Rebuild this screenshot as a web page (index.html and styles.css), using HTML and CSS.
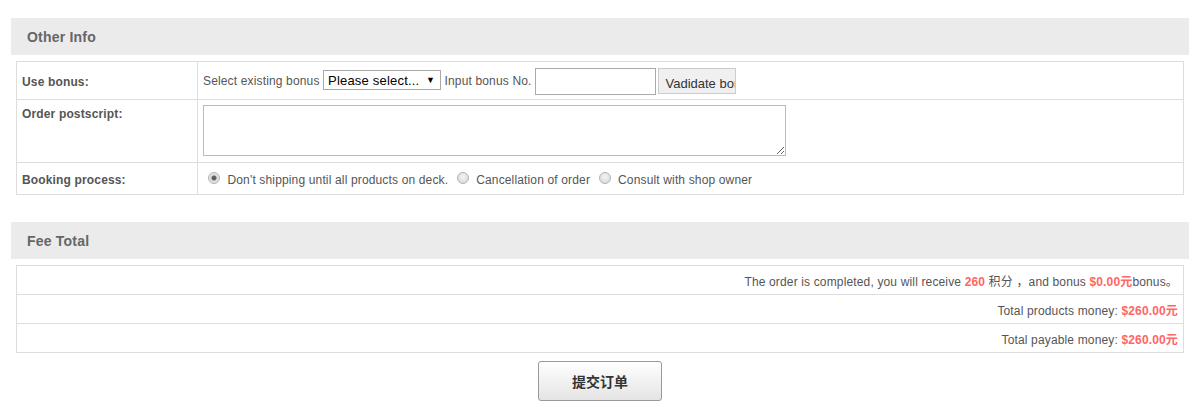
FILE: index.html
```html
<!DOCTYPE html>
<html>
<head>
<meta charset="utf-8">
<link rel="stylesheet" href="styles.css">
</head>
<body>
<div class="wrap">
  <div class="section-head">Other Info</div>
  <table class="info">
    <tr class="r1">
      <td class="lbl">Use bonus:</td>
      <td class="val">
        <span class="txt">Select existing bonus</span>
        <span class="sel"><span>Please select...</span><span class="arrow">▼</span></span>
        <span class="txt">Input bonus No.</span>
        <input class="bonus-input" type="text">
        <button class="validate">Vadidate bonus</button>
      </td>
    </tr>
    <tr class="r2">
      <td class="lbl top">Order postscript:</td>
      <td class="val top"><textarea class="ps"></textarea></td>
    </tr>
    <tr class="r3">
      <td class="lbl">Booking process:</td>
      <td class="val">
        <label class="opt"><input type="radio" name="b" checked> Don't shipping until all products on deck.</label>
        <label class="opt"><input type="radio" name="b"> Cancellation of order</label>
        <label class="opt"><input type="radio" name="b"> Consult with shop owner</label>
      </td>
    </tr>
  </table>

  <div class="section-head second">Fee Total</div>
  <table class="fee">
    <tr><td>The order is completed, you will receive <b class="red">260</b> 积分 ，and bonus <b class="red">$0.00元</b>bonus。</td></tr>
    <tr><td>Total products money: <b class="red">$260.00元</b></td></tr>
    <tr><td>Total payable money: <b class="red">$260.00元</b></td></tr>
  </table>
  <div class="submit-row"><button class="submit">提交订单</button></div>
</div>
</body>
</html>
```

FILE: styles.css
```css
html, body { margin: 0; padding: 0; background: #fff; }
body {
  font-family: "Liberation Sans", Arial, "Noto Sans CJK SC", sans-serif;
  font-size: 12px;
  color: #555;
  letter-spacing: 0.15px;
}
.wrap { margin: 18px 0 0 11px; width: 1178px; }
.section-head {
  height: 37px;
  line-height: 38px;
  background: #ebebeb;
  padding-left: 16px;
  font-size: 14px;
  font-weight: bold;
  color: #666;
  letter-spacing: 0.2px;
}
.section-head.second { margin-top: 27px; }
table { border-collapse: collapse; margin: 6px 5px 0 5px; width: 1168px; }
td { border: 1px solid #ddd; padding: 0 5px; }
.info .lbl { width: 170px; font-weight: bold; color: #555; }
.info .r1 td { height: 35px; padding-top: 2px; }
.info .r2 td { height: 55px; }
.info .r3 td { height: 29px; padding-top: 2px; }
.info td.top { vertical-align: top; padding-top: 7px; }
.info .r2 td.val { padding-top: 5px; }
.val { white-space: nowrap; }
.sel {
  display: inline-flex;
  align-items: center;
  justify-content: space-between;
  box-sizing: border-box;
  width: 118px; height: 20px;
  border: 1px solid #a9a9a9;
  padding: 0 5px 0 4px;
  font-size: 13px; color: #000;
  letter-spacing: 0.2px;
  vertical-align: middle;
  margin-top: -3px;
}
.sel .arrow { font-size: 9px; }
.bonus-input {
  box-sizing: border-box;
  width: 121px; height: 27px;
  border: 1px solid #aaa;
  vertical-align: middle;
  margin: -1px 0 0 0;
}
.validate {
  box-sizing: border-box;
  width: 78px; height: 26px;
  border: 1px solid #ccc;
  background: #f0f0f0;
  font-family: "Liberation Sans", Arial, sans-serif;
  font-size: 13px; color: #333;
  padding: 4px 0 0 6px;
  text-align: left;
  overflow: hidden; white-space: nowrap;
  text-overflow: clip;
  vertical-align: middle;
  margin: -1px 0 0 -1px;
}
.ps {
  box-sizing: border-box;
  width: 583px; height: 51px;
  border: 1px solid #bbb;
  margin: 0; display: block;
}
.opt { margin-right: 0; }
.opt input {
  appearance: none;
  -webkit-appearance: none;
  box-sizing: border-box;
  width: 12px; height: 12px;
  border-radius: 50%;
  border: 1px solid #b5b5b5;
  background: radial-gradient(circle at 50% 40%, #f4f4f4, #d4d4d4);
  margin: 0 4px 0 5px;
  vertical-align: 0;
}
.opt input:checked {
  background: radial-gradient(circle, #555 0, #666 2px, #dcdcdc 3px, #e8e8e8 100%);
}
.fee td { height: 28px; text-align: right; padding: 0 5px; }
.red { color: #f66; }
.submit-row { display: flex; justify-content: center; margin-top: 8px; }
.submit {
  width: 124px; height: 40px;
  border: 1px solid #999;
  border-radius: 3px;
  background: linear-gradient(#fff, #e4e4e4);
  font-family: "Noto Sans CJK SC", sans-serif;
  font-size: 14px; font-weight: bold; color: #333;
}
```
